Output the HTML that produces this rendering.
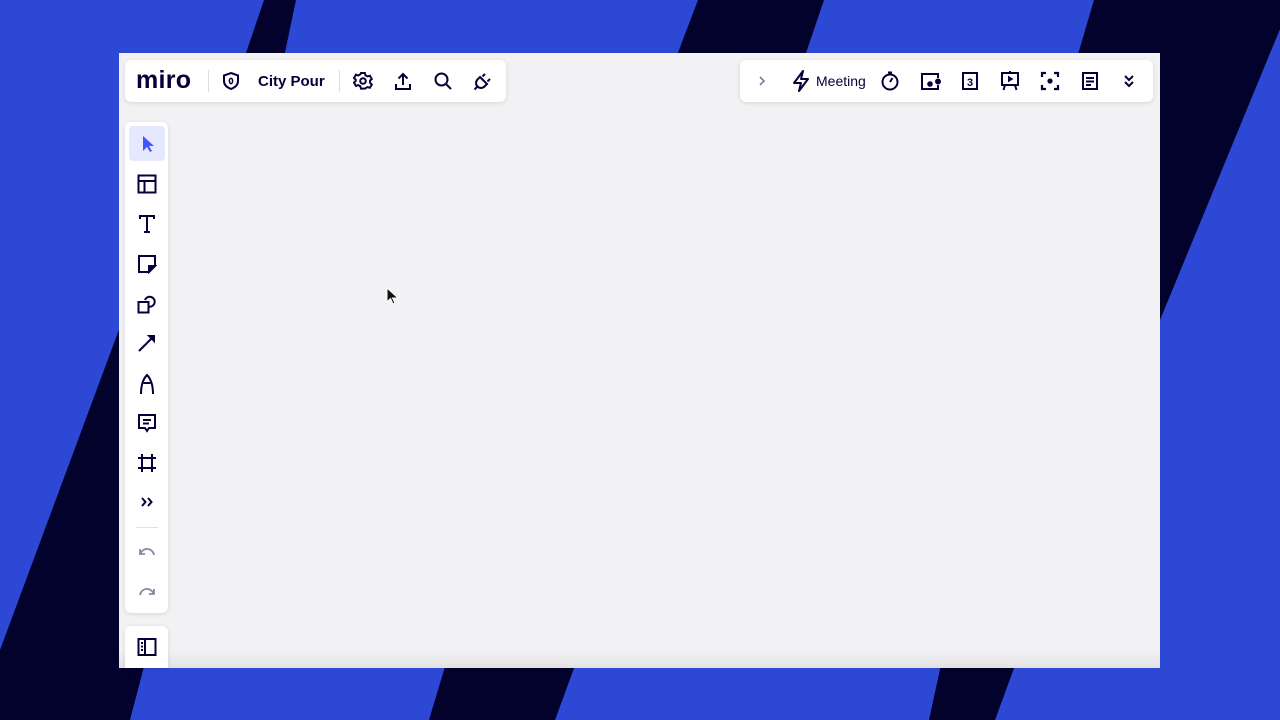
<!DOCTYPE html>
<html><head><meta charset="utf-8"><style>
*{margin:0;padding:0;box-sizing:border-box}
body{width:1280px;height:720px;overflow:hidden;background:#2d48d4;position:relative;font-family:"Liberation Sans",sans-serif}
#bg{position:absolute;left:0;top:0}
#frame{position:absolute;left:119px;top:53px;width:1041px;height:615px;background:#f2f2f4;overflow:hidden}
#frame .shade{position:absolute;left:0;bottom:0;width:100%;height:18px;background:linear-gradient(#f2f2f4,#e2e2e4)}
.bar{position:absolute;background:#fff;border-radius:6px;box-shadow:0 1px 4px rgba(0,0,0,.12)}
.ic{position:absolute}
.t{position:absolute;color:#050038}
</style></head><body>
<svg id="bg" width="1280" height="720">
<g fill="#03022d">
<polygon points="264,0 296,0 275,100 230,100"/>
<polygon points="698,0 824,0 790,100 660,100"/>
<polygon points="1094,0 1292,0 1160,320 1000,320"/>
<polygon points="0,650 130,300 240,300 130,720 0,720"/>
<polygon points="447,660 577,660 555,720 429,720"/>
<polygon points="942,660 1017,660 995,720 929,720"/>
</g>
</svg>
<div id="frame"><div class="shade"></div></div>

<!-- top-left bar -->
<div class="bar" style="left:125px;top:60px;width:381px;height:42px"></div>
<div class="t" style="left:136px;top:66px;font-size:25px;font-weight:bold;letter-spacing:0.3px">miro</div>
<div style="position:absolute;left:208px;top:70px;width:1px;height:22px;background:#ddd"></div>
<svg class="ic" style="left:221px;top:71px" width="20" height="20" viewBox="0 0 20 20" fill="none" stroke="#050038" stroke-width="2"><path d="M10 2 L17 4.5 V10 C17 14 14 16.5 10 18 C6 16.5 3 14 3 10 V4.5 Z"/><ellipse cx="10" cy="10" rx="1.6" ry="2.6" stroke-width="1.5"/></svg>
<div class="t" style="left:258px;top:73px;font-size:15px;font-weight:bold">City Pour</div>
<div style="position:absolute;left:339px;top:70px;width:1px;height:22px;background:#ddd"></div>
<svg class="ic" style="left:353px;top:71px" width="20" height="20" viewBox="0 0 20 20" fill="none" stroke="#050038" stroke-width="2"><path d="M8 2h4l.6 2.4 2.2 1.2 2.3-.8 2 3.4-1.8 1.6v2.4l1.8 1.6-2 3.4-2.3-.8-2.2 1.2L12 18H8l-.6-2.4-2.2-1.2-2.3.8-2-3.4 1.8-1.6V8.8L.9 7.2l2-3.4 2.3.8 2.2-1.2Z" transform="translate(0.1 0) scale(0.98)"/><circle cx="10" cy="10" r="2.8"/></svg>
<svg class="ic" style="left:393px;top:71px" width="20" height="20" viewBox="0 0 20 20" fill="none" stroke="#050038" stroke-width="2"><path d="M10 14V3M5.5 7.5 10 3l4.5 4.5M3 13v5h14v-5"/></svg>
<svg class="ic" style="left:433px;top:71px" width="20" height="20" viewBox="0 0 20 20" fill="none" stroke="#050038" stroke-width="2"><circle cx="8.5" cy="8.5" r="6"/><path d="M13 13l5 5"/></svg>
<svg class="ic" style="left:473px;top:71px" width="20" height="20" viewBox="0 0 20 20" fill="none" stroke="#050038" stroke-width="2"><path d="M7 6l7 7-2.5 2.5a4.5 4.5 0 0 1-7-7Z"/><path d="M12 3l-2.5 2.5M17 8l-2.5 2.5M5 15l-3.5 3.5"/></svg>

<!-- top-right bar -->
<div class="bar" style="left:740px;top:60px;width:413px;height:42px"></div>
<svg class="ic" style="left:755px;top:73px" width="14" height="16" viewBox="0 0 14 16" fill="none" stroke="#77779a" stroke-width="1.6"><path d="M5 4l4 4-4 4"/></svg>
<svg class="ic" style="left:791px;top:70px" width="20" height="22" viewBox="0 0 20 22" fill="none" stroke="#050038" stroke-width="2" stroke-linejoin="round"><path d="M12 1 3 13h7l-2 8 9-12h-7Z"/></svg>
<div class="t" style="left:816px;top:73px;font-size:14px">Meeting</div>
<svg class="ic" style="left:880px;top:71px" width="20" height="20" viewBox="0 0 20 20" fill="none" stroke="#050038" stroke-width="2"><circle cx="10" cy="11" r="7.5"/><path d="M10 11l2.5-4M8 1.5h4"/></svg>
<svg class="ic" style="left:920px;top:71px" width="22" height="20" viewBox="0 0 22 20" fill="none" stroke="#050038" stroke-width="2"><path d="M18 7V3H2v15h16v-4"/><circle cx="10" cy="13" r="1.8" fill="#050038"/><circle cx="18" cy="10.5" r="2" fill="#050038"/></svg>
<svg class="ic" style="left:960px;top:71px" width="20" height="20" viewBox="0 0 20 20" fill="none" stroke="#050038" stroke-width="2"><rect x="3" y="2" width="14" height="16"/><text x="7" y="15" font-size="11" font-family="Liberation Sans" font-weight="bold" fill="#050038" stroke="none">3</text></svg>
<svg class="ic" style="left:1000px;top:70px" width="20" height="22" viewBox="0 0 20 22" fill="none" stroke="#050038" stroke-width="2"><path d="M10 1v2M2 3h16v12H2Z M5 15l-1.5 5M15 15l1.5 5"/><path d="M8.5 6.5v5l4-2.5Z" fill="#050038" stroke-width="1"/></svg>
<svg class="ic" style="left:1040px;top:71px" width="20" height="20" viewBox="0 0 20 20" fill="none" stroke="#050038" stroke-width="2.2"><path d="M2 6V2h4M14 2h4v4M18 14v4h-4M6 18H2v-4"/><circle cx="10" cy="10" r="2.6" fill="#050038" stroke="none"/></svg>
<svg class="ic" style="left:1080px;top:71px" width="20" height="20" viewBox="0 0 20 20" fill="none" stroke="#050038" stroke-width="2"><rect x="3" y="2" width="14" height="16"/><path d="M6 7h8M6 10.5h8M6 14h5"/></svg>
<svg class="ic" style="left:1122px;top:73px" width="14" height="16" viewBox="0 0 14 16" fill="none" stroke="#050038" stroke-width="2"><path d="M3 3l4 4 4-4M3 9l4 4 4-4"/></svg>

<!-- left toolbar -->
<div class="bar" style="left:125px;top:122px;width:43px;height:491px"></div>
<div style="position:absolute;left:129px;top:126px;width:36px;height:35px;background:#e6e9fd;border-radius:4px"></div>
<svg class="ic" style="left:138px;top:134px" width="18" height="20" viewBox="0 0 18 20"><path d="M5 2v15l4-4 3 5 2-1-3-5h5Z" fill="#4255ff"/></svg>
<svg class="ic" style="left:137px;top:174px" width="20" height="20" viewBox="0 0 20 20" fill="none" stroke="#050038" stroke-width="2"><rect x="1.5" y="1.5" width="17" height="17"/><path d="M1.5 7h17M7.5 7v11.5"/></svg>
<svg class="ic" style="left:137px;top:214px" width="20" height="20" viewBox="0 0 20 20" fill="none" stroke="#050038" stroke-width="2"><path d="M3 5V2h14v3M10 2v16M7 18h6"/></svg>
<svg class="ic" style="left:137px;top:254px" width="20" height="20" viewBox="0 0 20 20" fill="none" stroke="#050038" stroke-width="2"><path d="M2 2h16v10l-6 6H2Z"/><path d="M12 18v-6h6Z" fill="#050038"/></svg>
<svg class="ic" style="left:137px;top:294px" width="20" height="20" viewBox="0 0 20 20" fill="none" stroke="#050038" stroke-width="2"><rect x="1.5" y="8" width="10" height="10.5"/><path d="M11.5 12.6A5 5 0 1 0 8 6"/></svg>
<svg class="ic" style="left:137px;top:333px" width="20" height="20" viewBox="0 0 20 20" fill="none" stroke="#050038" stroke-width="2"><path d="M2 18 15 5"/><path d="M11 2.5h6.5V9Z" fill="#050038" stroke-width="1"/></svg>
<svg class="ic" style="left:137px;top:373px" width="20" height="22" viewBox="0 0 20 22" fill="none" stroke="#050038" stroke-width="2"><path d="M4 21C4 13 6 6 10 2c4 4 6 11 6 19M6.5 10h7"/></svg>
<svg class="ic" style="left:137px;top:413px" width="20" height="22" viewBox="0 0 20 22" fill="none" stroke="#050038" stroke-width="2"><path d="M2 2h16v13h-6l-2 3-2-3H2Z M6 7h8M6 10.5h6"/></svg>
<svg class="ic" style="left:137px;top:453px" width="20" height="20" viewBox="0 0 20 20" fill="none" stroke="#050038" stroke-width="2"><path d="M5 1v18M15 1v18M1 5h18M1 15h18"/></svg>
<svg class="ic" style="left:140px;top:495px" width="14" height="14" viewBox="0 0 14 14" fill="none" stroke="#050038" stroke-width="2"><path d="M2 3l3.5 4L2 11M8 3l3.5 4L8 11"/></svg>
<div style="position:absolute;left:136px;top:527px;width:22px;height:1px;background:#e0e0e0"></div>
<svg class="ic" style="left:138px;top:545px" width="18" height="14" viewBox="0 0 18 14" fill="none" stroke="#8a8aa6" stroke-width="1.8"><path d="M2 4v5h5M2.5 8.5A7 7 0 0 1 16 10"/></svg>
<svg class="ic" style="left:138px;top:585px" width="18" height="14" viewBox="0 0 18 14" fill="none" stroke="#8a8aa6" stroke-width="1.8"><path d="M16 4v5h-5M15.5 8.5A7 7 0 0 0 2 10"/></svg>
<div class="bar" style="left:125px;top:626px;width:43px;height:42px;border-radius:6px 6px 0 0"></div>
<svg class="ic" style="left:137px;top:637px" width="20" height="20" viewBox="0 0 20 20" fill="none" stroke="#050038" stroke-width="2"><rect x="1.5" y="2" width="17" height="16"/><path d="M8 2v16M4 6h2M4 9.5h2M4 13h2"/></svg>
<!-- cursor -->
<svg class="ic" style="left:386px;top:287px" width="14" height="20" viewBox="0 0 14 20"><path d="M1 1v14l3.5-3.5 2.5 5.5 2-1-2.5-5H12Z" fill="#111" stroke="#fff" stroke-width="1"/></svg>
</body></html>
